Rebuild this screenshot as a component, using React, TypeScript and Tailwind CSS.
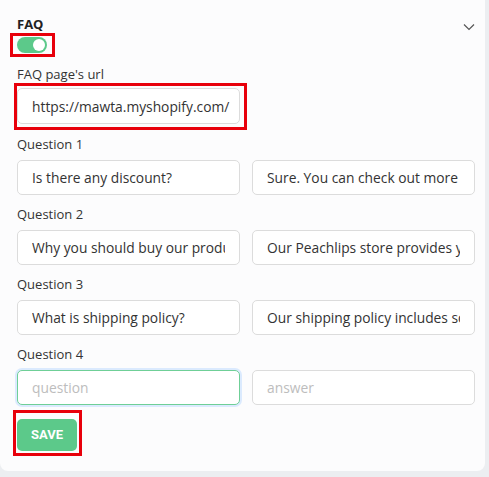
import React from "react";

const font = { fontFamily: '"Open Sans", "Noto Sans", sans-serif' };

interface FaqRow {
  question: string;
  answer: string;
}

const rows: FaqRow[] = [
  { question: "Is there any discount?", answer: "Sure. You can check out more details in our store" },
  { question: "Why you should buy our products?", answer: "Our Peachlips store provides you the best quality" },
  { question: "What is shipping policy?", answer: "Our shipping policy includes some useful details" },
  { question: "", answer: "" },
];

const Mark: React.FC<{ className: string }> = ({ className }) => (
  <div className={`pointer-events-none absolute border-[3px] border-[#e8000b] ${className}`} />
);

const Field: React.FC<{ value: string; placeholder: string; focused?: boolean }> = ({
  value,
  placeholder,
  focused,
}) => (
  <input
    readOnly
    value={value}
    placeholder={placeholder}
    className={`h-[35px] w-[223px] shrink-0 rounded-[5px] border bg-white px-[14px] text-[13.8px] text-[#333] outline-none placeholder:text-[#bdbdbd] ${
      focused
        ? "border-[#6fcf97] shadow-[0_0_0_2px_#dbeafe]"
        : "border-[#dcdcdc]"
    }`}
    style={font}
  />
);

export default function App() {
  return (
    <div className="h-[477px] w-[489px] bg-[#eceef1]" style={font}>
      <div className="h-[471px] w-[485px] rounded-b-[8px] bg-[#fcfcfd] pl-[17px] pr-[10px] pt-[16px] text-[#333]">
        <div className="flex items-start justify-between">
          <div>
            <div className="text-[13px] font-bold leading-[16px] text-[#222]">FAQ</div>
            <div className="relative mt-[5px] h-[16px] w-[30px]">
              <div className="flex h-[16px] w-[30px] items-center justify-end rounded-full bg-[#5cc98a] pr-[2px]">
                <div className="h-[12px] w-[12px] rounded-full bg-white" />
              </div>
              <Mark className="-left-[7px] -top-[4px] h-[24px] w-[45px]" />
            </div>
          </div>
          <svg width="12" height="8" viewBox="0 0 12 8" className="mt-[7px]">
            <path d="M1 1.5 L6 6.5 L11 1.5" fill="none" stroke="#555" strokeWidth="1.2" />
          </svg>
        </div>

        <div className="mt-[11px] h-[20px] text-[13px] leading-[20px]">FAQ page's url</div>
        <div className="relative mt-[4px] w-[223px]">
          <input
            readOnly
            value="https://mawta.myshopify.com/"
            className="h-[36px] w-[223px] rounded-[5px] border border-[#dcdcdc] bg-white pl-[14px] pr-[4px] text-[13.8px] text-[#333] outline-none"
            style={font}
          />
          <Mark className="-left-[3px] -top-[5px] h-[47px] w-[233px]" />
        </div>

        <div className="mt-[10px] flex flex-col gap-[9px]">
          {rows.map((row, i) => (
            <div key={i}>
              <div className="mb-[6px] h-[20px] text-[13px] leading-[20px]">Question {i + 1}</div>
              <div className="flex gap-[12px]">
                <Field value={row.question} placeholder="question" focused={i === 3} />
                <Field value={row.answer} placeholder="answer" />
              </div>
            </div>
          ))}
        </div>

        <div className="relative mt-[14px] w-[60px]">
          <button
            className="h-[32px] w-[60px] rounded-[5px] bg-[#5cc98a] text-[13px] font-bold text-white"
            style={{ fontFamily: "Roboto, sans-serif" }}
          >
            SAVE
          </button>
          <Mark className="-left-[4px] -top-[9px] h-[46px] w-[69px]" />
        </div>
      </div>
    </div>
  );
}
